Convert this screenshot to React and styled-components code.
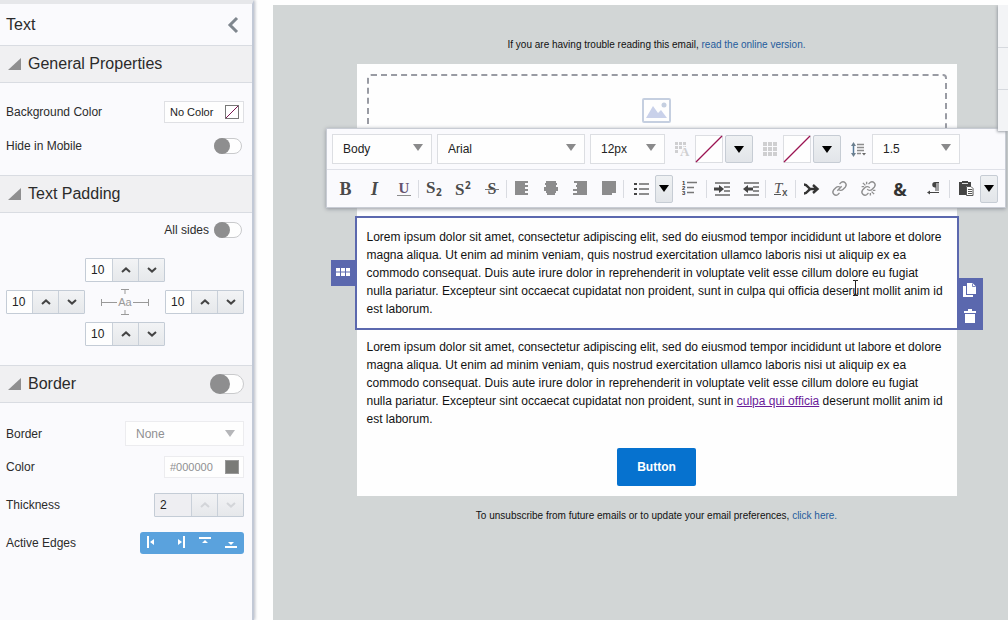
import React, { useState } from 'react';
import styled, { createGlobalStyle } from 'styled-components';

const GlobalStyle = createGlobalStyle`
  * {
    box-sizing: border-box;
  }

  body {
    margin: 0;
    background: #fefefe;
    color: #2b2b2b;
    font-family: "Liberation Sans", Arial, sans-serif;
    font-size: 12px;
  }

  button, input, select {
    font-family: inherit;
    font-size: 12px;
    color: inherit;
    margin: 0;
  }

  svg {
    display: block;
    overflow: visible;
  }
`

const Page = styled.div`
  display: flex;
  min-height: 100vh;
`

/* ---------- side panel ---------- */

const Sidebar = styled.aside`
  flex: none;
  width: 254px;
  border-top: 4px solid #e6e7ea;
  border-right: 2px solid #c2c9d6;
  background: #fafafd;
  box-shadow: 1px 0 3px #b9bcc4;
`

const PanelHeader = styled.div`
  display: flex;
  justify-content: space-between;
  align-items: center;
  height: 41px;
  padding: 0 13px 0 6px;

  h1 {
    margin: 0;
    font-size: 16px;
    font-weight: normal;
  }

  button {
    padding: 0;
    border: none;
    background: none;
  }
`

const SectionHeader = styled.div`
  display: flex;
  align-items: center;
  gap: 7px;
  height: 38px;
  padding: 0 8px;
  border-top: 1px solid #d9dce2;
  border-bottom: 1px solid #d9dce2;
  background: #f0f0f2;

  h2 {
    flex: 1;
    margin: 0;
    font-size: 16px;
    font-weight: normal;
  }
`

const SectionBody = styled.div`
  padding: ${(props) => props.$pad || '18px 8px 18px 6px'};
`

const Row = styled.div`
  display: flex;
  align-items: center;
  justify-content: ${(props) => (props.$end ? 'flex-end' : 'space-between')};
  gap: 5px;
  min-height: 22px;
  margin-top: ${(props) => props.$top || 0}px;
  padding-right: ${(props) => (props.$inset ? 2 : 0)}px;
`

const Toggle = styled.input`
  appearance: none;
  width: ${(props) => (props.$big ? 34 : 28)}px;
  height: ${(props) => (props.$big ? 20 : 16)}px;
  border: 1px solid #c9cacc;
  border-radius: 10px;
  background: #fefefe;

  &::before {
    content: "";
    display: block;
    width: ${(props) => (props.$big ? 20 : 16)}px;
    height: ${(props) => (props.$big ? 20 : 16)}px;
    margin: -1px;
    border-radius: 50%;
    background: #8e8e8f;
  }

  &:checked::before {
    margin-left: auto;
    background: #0572ce;
  }
`

const ColorButton = styled.button`
  display: flex;
  align-items: center;
  justify-content: space-between;
  width: 80px;
  height: 22px;
  padding: 0 4px 0 5px;
  border: 1px solid ${(props) => (props.disabled ? '#ececef' : '#dfe0e4')};
  background: #fefefe;
  font-size: 11px;
  color: ${(props) => (props.disabled ? '#8f9092' : '#222')};
`

const Swatch = styled.span`
  width: 14px;
  height: 14px;
  border: 1px solid #999;
  background: #7a7b78;
`

const PaddingGrid = styled.div`
  display: grid;
  grid-template-columns: 79px 80px 79px;
  grid-template-rows: repeat(3, 24px);
  grid-template-areas:
    ". top ."
    "left mid right"
    ". bottom .";
  row-gap: 8px;
  margin-top: 17px;

  > svg {
    grid-area: mid;
    justify-self: center;
    margin-top: -2px;
  }
`

const StepperBox = styled.div`
  display: flex;
  grid-area: ${(props) => props.$area || 'auto'};
  width: ${(props) => (props.$wide ? '90px' : '100%')};
  height: 24px;
  border: 1px solid #c4ccd6;
  border-radius: 1px;

  input {
    flex: 1;
    min-width: 0;
    padding: 0 0 0 5px;
    border: none;
    background: ${(props) => (props.$wide ? '#eeeef2' : '#fefefe')};
    color: #222;
  }

  button {
    display: grid;
    place-items: center;
    width: 26px;
    padding: 0;
    border: none;
    border-left: 1px solid #c9d0d9;
    background: linear-gradient(#f2f3f5, #e6e8eb);
    color: ${(props) => (props.$wide ? '#d3d5d9' : '#444')};
  }
`

const SelectBox = styled.div`
  display: grid;
  align-items: center;
  width: ${(props) => props.$width}px;
  height: ${(props) => props.$height || 30}px;

  select {
    grid-area: 1 / 1;
    appearance: none;
    width: 100%;
    height: 100%;
    padding: 0 24px 0 10px;
    border: 1px solid ${(props) => (props.$dim ? '#ececef' : '#dcdee2')};
    border-radius: 0;
    background: #fefefe;
    color: ${(props) => (props.$dim ? '#8f9092' : '#222')};
    opacity: 1;
  }

  svg {
    grid-area: 1 / 1;
    justify-self: end;
    margin: 0 9px ${(props) => (props.$dim ? 0 : 4)}px 0;
    fill: ${(props) => (props.$dim ? '#b5b6b9' : '#8a8a8b')};
    pointer-events: none;
  }
`

const EdgeGroup = styled.div`
  display: grid;
  grid-template-columns: repeat(4, 26px);
  height: 22px;
  border-radius: 3px;
  background: #5aa2dd;

  button {
    display: grid;
    place-items: center;
    padding: 0 0 2px;
    border: none;
    background: none;
  }
`

/* ---------- email canvas ---------- */

const Canvas = styled.main`
  position: relative;
  flex: 1;
  display: flex;
  flex-direction: column;
  align-items: center;
  min-width: 0;
  margin: 5px 0 0 19px;
  padding-left: 32px;
  background: #d2d6d6;
  overflow: hidden;
`

const FinePrint = styled.p`
  margin: 0;
  padding: ${(props) => props.$pad};
  font-size: 10px;
  line-height: 12px;
  color: #111;

  a {
    color: #1f5c9c;
    text-decoration: none;
  }
`

const Email = styled.div`
  width: 600px;
  background: #fefefe;
`

const Block = styled.section`
  position: relative;
  padding: 10px;
  outline: ${(props) => (props.$selected ? '2px solid #5b68ae' : 'none')};
  text-align: ${(props) => (props.$center ? 'center' : 'left')};

  p {
    margin: 0;
    line-height: 18px;
    color: #111;
  }

  a {
    color: #6a1b9a;
  }
`

const ImageDrop = styled.div`
  display: flex;
  justify-content: center;
  height: 134px;
  padding-top: 22px;
  border: 2px dashed #999ba3;
  border-radius: 4px;
`

const CtaButton = styled.button`
  display: block;
  height: 38px;
  margin: 0 auto;
  padding: 0 20px;
  border: none;
  border-radius: 2px;
  background: #0672cf;
  color: #fff;
  font-weight: bold;
`

const BlockTools = styled.div`
  position: absolute;
  ${(props) => (props.$left ? 'right: calc(100% + 2px); top: 42px;' : 'left: calc(100% + 2px); bottom: -2px;')}

  button {
    display: grid;
    place-items: center;
    width: 24px;
    height: 26px;
    padding: 0 ${(props) => (props.$left ? 0 : 2)}px 2px 0;
    border: none;
    background: #5b68ae;
  }
`

const TextCursor = styled.svg`
  position: absolute;
  left: 495px;
  top: 62px;
`

const EdgeTabs = styled.div`
  position: absolute;
  top: 0;
  right: 0;
  z-index: 3;
  display: grid;
  grid-template-rows: 42px 42px 42px;
  width: 10px;
  background: #f3f4f6;
  box-shadow: -1px 1px 3px #9da1a8;

  span + span {
    border-top: 1px solid #d6d9de;
  }
`

/* ---------- floating text toolbar ---------- */

const Toolbar = styled.div`
  position: absolute;
  top: 123px;
  left: 53px;
  right: 2px;
  z-index: 2;
  border: 1px solid #c8ccd4;
  background: #fafafd;
  box-shadow: 0 1px 4px #8f939b;
`

const ToolRow = styled.div`
  display: flex;
  align-items: center;
  height: ${(props) => props.$height}px;
  padding-left: ${(props) => props.$start}px;

  & + & {
    border-top: 1px solid #dfe1e8;
  }
`

const Gap = styled.span`
  flex: none;
  width: ${(props) => props.$width}px;
`

const ColorWell = styled.button`
  width: 28px;
  height: 28px;
  padding: 0;
  border: 1px solid #dcdee2;
  background: #fefefe;
`

const DropButton = styled.button`
  display: grid;
  place-items: center;
  width: ${(props) => props.$width || 28}px;
  height: 28px;
  margin-left: ${(props) => (props.$width ? 0 : 2)}px;
  padding: 0;
  border: 1px solid #c6ccd4;
  border-radius: 2px;
  background: linear-gradient(#eff1f3, #e2e5e9);
`

const ToolButton = styled.button`
  display: grid;
  place-items: center;
  flex: none;
  width: ${(props) => props.$width || 29}px;
  height: 28px;
  padding: 0 0 0 ${(props) => props.$indent || 0}px;
  border: none;
  background: none;
  color: #4a4a4a;
`

const Separator = styled.span`
  flex: none;
  width: 1px;
  height: 18px;
  background: #d9dbe1;
`

const Letter = styled.span`
  font-family: ${(props) => (props.$sans ? '"Open Sans", sans-serif' : '"Liberation Serif", serif')};
  font-size: ${(props) => props.$size || 18}px;
  font-weight: ${(props) => props.$weight || 'bold'};
  font-style: ${(props) => (props.$italic ? 'italic' : 'normal')};
  line-height: 20px;
  color: ${(props) => props.$color || '#4a4a4a'};
`

function Arrow({ black }) {
  return (
    <svg width="10" height="7" viewBox="0 0 10 7" fill={black ? '#000' : undefined} aria-hidden="true">
      <path d="M0 0h10L5 7z" />
    </svg>
  );
}

function Triangle() {
  return (
    <svg width="13" height="12" viewBox="0 0 13 12" aria-hidden="true">
      <path d="M0 12L13 0v12z" fill="#8f8f90" />
    </svg>
  );
}

function Stepper({ label, start, area, wide }) {
  const [value, setValue] = useState(start);

  return (
    <StepperBox $wide={wide} $area={area}>
      <input aria-label={label} value={value} disabled={wide} onChange={(e) => setValue(e.target.value)} />
      <button type="button" aria-label="Increase" disabled={wide} onClick={() => setValue(Number(value) + 1)}>
        <svg width="10" height="6" viewBox="0 0 10 6" fill="none" stroke="currentColor" strokeWidth="2">
          <path d="M1 5l4-3.6L9 5" />
        </svg>
      </button>
      <button type="button" aria-label="Decrease" disabled={wide} onClick={() => setValue(Number(value) - 1)}>
        <svg width="10" height="6" viewBox="0 0 10 6" fill="none" stroke="currentColor" strokeWidth="2">
          <path d="M1 1l4 3.6L9 1" />
        </svg>
      </button>
    </StepperBox>
  );
}

function Select({ label, id, value, width, height, dim }) {
  return (
    <SelectBox $width={width} $height={height} $dim={dim}>
      <select id={id} aria-label={label} disabled={dim} defaultValue={value}>
        <option>{value}</option>
      </select>
      <Arrow />
    </SelectBox>
  );
}

function Lines({ rows, width = 16, color = '#8c8c8d' }) {
  return (
    <svg width={width} height="15" viewBox={`0 0 ${width} 15`} fill={color}>
      {rows.map(([x, w], i) => (
        <rect key={i} x={x} y={i * 2} width={w} height="2" />
      ))}
    </svg>
  );
}

function Dots({ letter }) {
  return (
    <svg width="16" height="17" viewBox="0 0 16 17" fill="#cfcfd1">
      {[0, 1, 2].map((r) => [0, 1, 2].map((c) => {
        if (letter) {
          return r + c > 3 || (r === 2 && c > 0) ? null : <rect key={`${r}${c}`} x={c * 4} y={1 + r * 4} width="3" height="3" />;
        }
        return <rect key={`${r}${c}`} x={c * 5} y={1 + r * 5} width="4" height="4" />;
      }))}
      {letter && (
        <text x="5" y="15" fontFamily="Liberation Serif" fontSize="13" fontWeight="bold" stroke="#fafafd" strokeWidth="2" paintOrder="stroke">A</text>
      )}
    </svg>
  );
}

function SlashLine() {
  return (
    <svg width="26" height="26" viewBox="0 0 26 26">
      <path d="M0 26L26 0" stroke="#9b1452" strokeWidth="1.2" />
    </svg>
  );
}

/* S with a small raised or lowered 2 */
function Script({ raised }) {
  return (
    <svg width="16" height="18" viewBox="0 0 16 18" fill="#4a4a4a" fontWeight="bold">
      <text x="0" y={raised ? 15 : 13} fontFamily="Liberation Serif" fontSize="17">S</text>
      <text x="10" y={raised ? 9 : 16} fontFamily="Open Sans" fontSize="10">2</text>
    </svg>
  );
}

function Indent({ out }) {
  return (
    <svg width="16" height="14" viewBox="0 0 16 14">
      <path d="M1 1h15M10 5h6M10 9h6M1 13h15" stroke="#8c8c8d" strokeWidth="2" />
      <path d={out ? 'M0 7l5-4v2.500h5v3H5V11z' : 'M10 7L5 3v2.500H0v3h5V11z'} fill="#444" />
    </svg>
  );
}

function ChainIcon({ broken }) {
  return (
    <svg width="15" height="15" viewBox="0 0 24 24" fill="none" stroke="#8f8f90" strokeWidth="2.200">
      <path d="M10 13a5 5 0 0 0 7.500.500l4-4a5 5 0 0 0-7-7l-2.500 2.500" />
      <path d="M14 11a5 5 0 0 0-7.500-.500l-4 4a5 5 0 0 0 7 7l2.500-2.500" />
      {broken
        ? <path d="M3 3l4 4M9 1v4M1 9h4M17 17l4 4M15 19v4M19 15h4" />
        : <path d="M8.500 15.500l7-7" />}
    </svg>
  );
}

function TextToolbar() {
  return (
    <Toolbar role="toolbar" aria-label="Text formatting">
      <ToolRow $height={40} $start={5}>
        <Select label="Style" value="Body" width={100} />
        <Gap $width={5} />
        <Select label="Font" value="Arial" width={148} />
        <Gap $width={5} />
        <Select label="Size" value="12px" width={75} />
        <ToolButton $width={30} $indent={5} aria-label="Text color"><Dots letter /></ToolButton>
        <ColorWell aria-label="No text color"><SlashLine /></ColorWell>
        <DropButton aria-label="Text color options"><Arrow black /></DropButton>
        <ToolButton $width={30} $indent={5} aria-label="Highlight"><Dots /></ToolButton>
        <ColorWell aria-label="No highlight"><SlashLine /></ColorWell>
        <DropButton aria-label="Highlight options"><Arrow black /></DropButton>
        <ToolButton $width={31} $indent={4} aria-label="Line height">
          <svg width="15" height="15" viewBox="0 0 15 15">
            <path d="M2.500 2v11" stroke="#56799a" strokeWidth="1.500" />
            <path d="M0 4l2.500-4L5 4zM0 11l2.500 4L5 11z" fill="#6d8090" />
            <path d="M6 2.500h7M6 5.500h7M6 8.500h7M6 11.500h4" stroke="#8c8c8d" strokeWidth="1.500" />
            <path d="M11 11h4l-2 2.500z" fill="#666" />
          </svg>
        </ToolButton>
        <Select label="Line height value" value="1.5" width={88} />
      </ToolRow>
      <ToolRow $height={38} $start={4}>
        <ToolButton aria-label="Bold"><Letter>B</Letter></ToolButton>
        <ToolButton aria-label="Italic"><Letter $italic>I</Letter></ToolButton>
        <ToolButton aria-label="Underline">
          <svg width="14" height="16" viewBox="0 0 14 16">
            <text x="7" y="12" textAnchor="middle" fontFamily="Liberation Serif" fontSize="15" fontWeight="bold" fill="#65536f">U</text>
            <path d="M0 14h14v1H0z" fill="#8c8c8d" />
          </svg>
        </ToolButton>
        <Separator />
        <ToolButton aria-label="Subscript"><Script /></ToolButton>
        <ToolButton aria-label="Superscript"><Script raised /></ToolButton>
        <ToolButton aria-label="Strikethrough">
          <svg width="14" height="16" viewBox="0 0 14 16">
            <text x="7" y="13" textAnchor="middle" fontFamily="Liberation Serif" fontSize="16" fontWeight="bold" fill="#4a4a4a">S</text>
            <path d="M0 8.500h14" stroke="#777" />
          </svg>
        </ToolButton>
        <Separator />
        <ToolButton aria-label="Align left">
          <Lines width={14} rows={[[0, 13], [0, 10], [0, 13], [0, 10], [0, 13], [0, 10], [0, 13]]} />
        </ToolButton>
        <ToolButton aria-label="Align center">
          <Lines width={14} rows={[[2, 10], [1, 12], [2, 10], [0, 14], [0, 14], [2, 10], [3, 8]]} />
        </ToolButton>
        <ToolButton aria-label="Align right">
          <Lines width={14} rows={[[1, 13], [4, 10], [3, 11], [4, 10], [0, 14], [4, 10], [0, 14]]} />
        </ToolButton>
        <ToolButton aria-label="Justify">
          <Lines width={14} rows={[[0, 14], [0, 14], [0, 14], [0, 14], [0, 14], [0, 14], [0, 10]]} />
        </ToolButton>
        <Separator />
        <ToolButton $width={31} $indent={4} aria-label="Bulleted list">
          <svg width="15" height="13" viewBox="0 0 15 13">
            <path d="M5 2h10M5 7h10M5 12h10" stroke="#8c8c8d" strokeWidth="2" />
            <path d="M0 1h3v2H0zM0 6h3v2H0zM0 11h3v2H0z" fill="#444" />
          </svg>
        </ToolButton>
        <DropButton $width={18} aria-label="List options"><Arrow black /></DropButton>
        <ToolButton $width={33} aria-label="Numbered list">
          <svg width="15" height="15" viewBox="0 0 15 15">
            <path d="M5 1.500h10M5 6.500h7M5 11.500h7" stroke="#777" strokeWidth="1.500" />
            <g fontFamily="Liberation Sans" fontSize="6" fontWeight="bold" fill="#333">
              <text x="0" y="4">1</text>
              <text x="0" y="9">2</text>
              <text x="0" y="14">3</text>
            </g>
          </svg>
        </ToolButton>
        <Separator />
        <ToolButton aria-label="Indent"><Indent /></ToolButton>
        <ToolButton aria-label="Outdent"><Indent out /></ToolButton>
        <Separator />
        <ToolButton aria-label="Clear formatting">
          <svg width="14" height="16" viewBox="0 0 14 16" fill="#555">
            <text x="0" y="12" fontFamily="Liberation Serif" fontSize="15" fontStyle="italic">T</text>
            <text x="8" y="15" fontFamily="Open Sans" fontSize="10" fontWeight="600">x</text>
            <path d="M0 13h7v1H0z" />
          </svg>
        </ToolButton>
        <Separator />
        <ToolButton aria-label="Merge field">
          <svg width="16" height="12" viewBox="0 0 16 12" fill="none" stroke="#333" strokeWidth="2.400">
            <path d="M1 1.500c4 0 4 4.500 7 4.500M1 10.500c4 0 4-4.500 7-4.500h6M10 2l4.500 4L10 10" />
          </svg>
        </ToolButton>
        <ToolButton aria-label="Link"><ChainIcon /></ToolButton>
        <ToolButton aria-label="Remove link"><ChainIcon broken /></ToolButton>
        <ToolButton $width={34} aria-label="Special character">
          <Letter $sans $size={18} $weight={700} $color="#333">&amp;</Letter>
        </ToolButton>
        <ToolButton $width={32} aria-label="Text direction">
          <svg width="13" height="13" viewBox="0 0 13 13" fill="#444">
            <path d="M8 0h4v1h-.500v8h-1V1H9.500v8h-1V5.500H8a2.700 2.700 0 0 1 0-5.500z" />
            <path d="M0 10.500L3 8.500V10h9v1H3v1.500z" />
          </svg>
        </ToolButton>
        <Separator />
        <ToolButton $width={30} $indent={2} aria-label="Paste">
          <svg width="15" height="15" viewBox="0 0 15 15">
            <path d="M0 1h3V0h6v1h3v4H7v9H0z" fill="#444" />
            <path d="M3 2.500h6" stroke="#ddd" />
            <path d="M7.500 5.500h4.500l2 2v7H7.500z" fill="#fff" stroke="#555" />
            <path d="M9 8.500h4M9 10.500h4M9 12.500h4" stroke="#555" />
          </svg>
        </ToolButton>
        <DropButton $width={18} aria-label="Paste options"><Arrow black /></DropButton>
      </ToolRow>
    </Toolbar>
  );
}

function PropertiesPanel() {
  const edges = [
    ['Left', 'M0 0h2v12H0zM7 3v6L3 6z'],
    ['Right', 'M10 0h2v12h-2zM5 3v6l4-3z'],
    ['Top', 'M0 1h12v2H0zM6 4l3 3H3z'],
    ['Bottom', 'M0 10h12v2H0zM6 9l3-3H3z'],
  ];

  return (
    <Sidebar>
      <PanelHeader>
        <h1>Text</h1>
        <button type="button" aria-label="Collapse panel">
          <svg width="12" height="16" viewBox="0 0 12 16" fill="none" stroke="#7f868e" strokeWidth="3">
            <path d="M10 1L3 8l7 7" />
          </svg>
        </button>
      </PanelHeader>

      <SectionHeader>
        <Triangle />
        <h2>General Properties</h2>
      </SectionHeader>
      <SectionBody>
        <Row>
          <label htmlFor="background">Background Color</label>
          <ColorButton id="background" type="button">
            No Color
            <svg width="14" height="14" viewBox="0 0 14 14">
              <rect x="0.500" y="0.500" width="13" height="13" fill="#fff" stroke="#777" />
              <path d="M1 13L13 1" stroke="#7b1550" />
            </svg>
          </ColorButton>
        </Row>
        <Row $top={12} $inset>
          <label htmlFor="hide">Hide in Mobile</label>
          <Toggle id="hide" type="checkbox" />
        </Row>
      </SectionBody>

      <SectionHeader>
        <Triangle />
        <h2>Text Padding</h2>
      </SectionHeader>
      <SectionBody $pad="6px 8px 19px 6px">
        <Row $end $inset>
          <label htmlFor="all-sides">All sides</label>
          <Toggle id="all-sides" type="checkbox" />
        </Row>
        <PaddingGrid>
          <Stepper label="Padding top" start="10" area="top" />
          <Stepper label="Padding left" start="10" area="left" />
          <svg width="48" height="28" viewBox="0 0 48 28">
            <path d="M0.500 11v7M1 14.500h15M47.500 11v7M32 14.500h15M20 1.500h8M24 1v5M20 26.500h8M24 22v5" stroke="#999" fill="none" />
            <text x="24" y="18" textAnchor="middle" fontFamily="Liberation Sans" fontSize="11" fill="#999">Aa</text>
          </svg>
          <Stepper label="Padding right" start="10" area="right" />
          <Stepper label="Padding bottom" start="10" area="bottom" />
        </PaddingGrid>
      </SectionBody>

      <SectionHeader>
        <Triangle />
        <h2>Border</h2>
        <Toggle $big type="checkbox" aria-label="Enable border" />
      </SectionHeader>
      <SectionBody>
        <Row>
          <label htmlFor="border">Border</label>
          <Select id="border" value="None" width={119} height={25} dim />
        </Row>
        <Row $top={10}>
          <label htmlFor="color">Color</label>
          <ColorButton id="color" type="button" disabled>
            #000000
            <Swatch />
          </ColorButton>
        </Row>
        <Row $top={15}>
          <span>Thickness</span>
          <Stepper label="Thickness" start="2" wide />
        </Row>
        <Row $top={15}>
          <span>Active Edges</span>
          <EdgeGroup role="group" aria-label="Active Edges">
            {edges.map(([name, d]) => (
              <button key={name} type="button" aria-label={name}>
                <svg width="12" height="12" viewBox="0 0 12 12" fill="#fff"><path d={d} /></svg>
              </button>
            ))}
          </EdgeGroup>
        </Row>
      </SectionBody>
    </Sidebar>
  );
}

function App() {
  return (
    <Page>
      <GlobalStyle />
      <PropertiesPanel />
      <Canvas>
        <FinePrint $pad="34px 0 13px">
          If you are having trouble reading this email, <a href="#online">read the online version.</a>
        </FinePrint>
        <Email>
          <Block>
            <ImageDrop>
              <svg width="29" height="25" viewBox="0 0 29 25">
                <rect x="1" y="1" width="27" height="23" rx="1" fill="#fefefe" stroke="#c5cfe0" strokeWidth="2" />
                <path d="M4 20l7-12 5 7 3-3 6 8z" fill="#c9d1ea" />
                <circle cx="22" cy="7" r="2.500" fill="#c5cfe0" />
              </svg>
            </ImageDrop>
          </Block>
          <Block $selected>
            <p>
              Lorem ipsum dolor sit amet, consectetur adipiscing elit, sed do eiusmod tempor incididunt ut labore et dolore
              magna aliqua. Ut enim ad minim veniam, quis nostrud exercitation ullamco laboris nisi ut aliquip ex ea
              commodo consequat. Duis aute irure dolor in reprehenderit in voluptate velit esse cillum dolore eu fugiat
              nulla pariatur. Excepteur sint occaecat cupidatat non proident, sunt in culpa qui officia deserunt mollit anim id
              est laborum.
            </p>
            <BlockTools $left>
              <button type="button" aria-label="Move block">
                <svg width="14" height="8" viewBox="0 0 14 8" fill="#fff">
                  <path d="M0 0h4v3.500H0zM5 0h4v3.500H5zM10 0h4v3.500h-4zM0 4.500h4V8H0zM5 4.500h4V8H5zM10 4.500h4V8h-4z" />
                </svg>
              </button>
            </BlockTools>
            <BlockTools>
              <button type="button" aria-label="Duplicate block">
                <svg width="13" height="15" viewBox="0 0 13 15" fill="#fff">
                  <path d="M4 0h5.500L13 3.500V11H4z" />
                  <path d="M9.500 0.500v3h3" fill="none" stroke="#5b68ae" strokeWidth=".8" />
                  <path d="M0 3h3v9h7v2H0z" />
                </svg>
              </button>
              <button type="button" aria-label="Delete block">
                <svg width="12" height="14" viewBox="0 0 12 14" fill="#fff">
                  <path d="M0 2h4V0h4v2h4v2H0zM1 5h10v9H1z" />
                </svg>
              </button>
            </BlockTools>
            <TextCursor width="8" height="16" viewBox="0 0 8 16" fill="none" stroke="#222" aria-hidden="true">
              <path d="M1 0.500h2.500v15H1M6 0.500H3.500M3.500 15.500H6" />
            </TextCursor>
          </Block>
          <Block>
            <p>
              Lorem ipsum dolor sit amet, consectetur adipiscing elit, sed do eiusmod tempor incididunt ut labore et dolore
              magna aliqua. Ut enim ad minim veniam, quis nostrud exercitation ullamco laboris nisi ut aliquip ex ea
              commodo consequat. Duis aute irure dolor in reprehenderit in voluptate velit esse cillum dolore eu fugiat
              nulla pariatur. Excepteur sint occaecat cupidatat non proident, sunt in <a href="#culpa">culpa qui officia</a> deserunt mollit anim id
              est laborum.
            </p>
          </Block>
          <Block $center>
            <CtaButton type="button">Button</CtaButton>
          </Block>
        </Email>
        <FinePrint $pad="14px 0">
          To unsubscribe from future emails or to update your email preferences, <a href="#unsubscribe">click here.</a>
        </FinePrint>
        <TextToolbar />
        <EdgeTabs>
          <span />
          <span />
          <span />
        </EdgeTabs>
      </Canvas>
    </Page>
  );
}

export default App;
